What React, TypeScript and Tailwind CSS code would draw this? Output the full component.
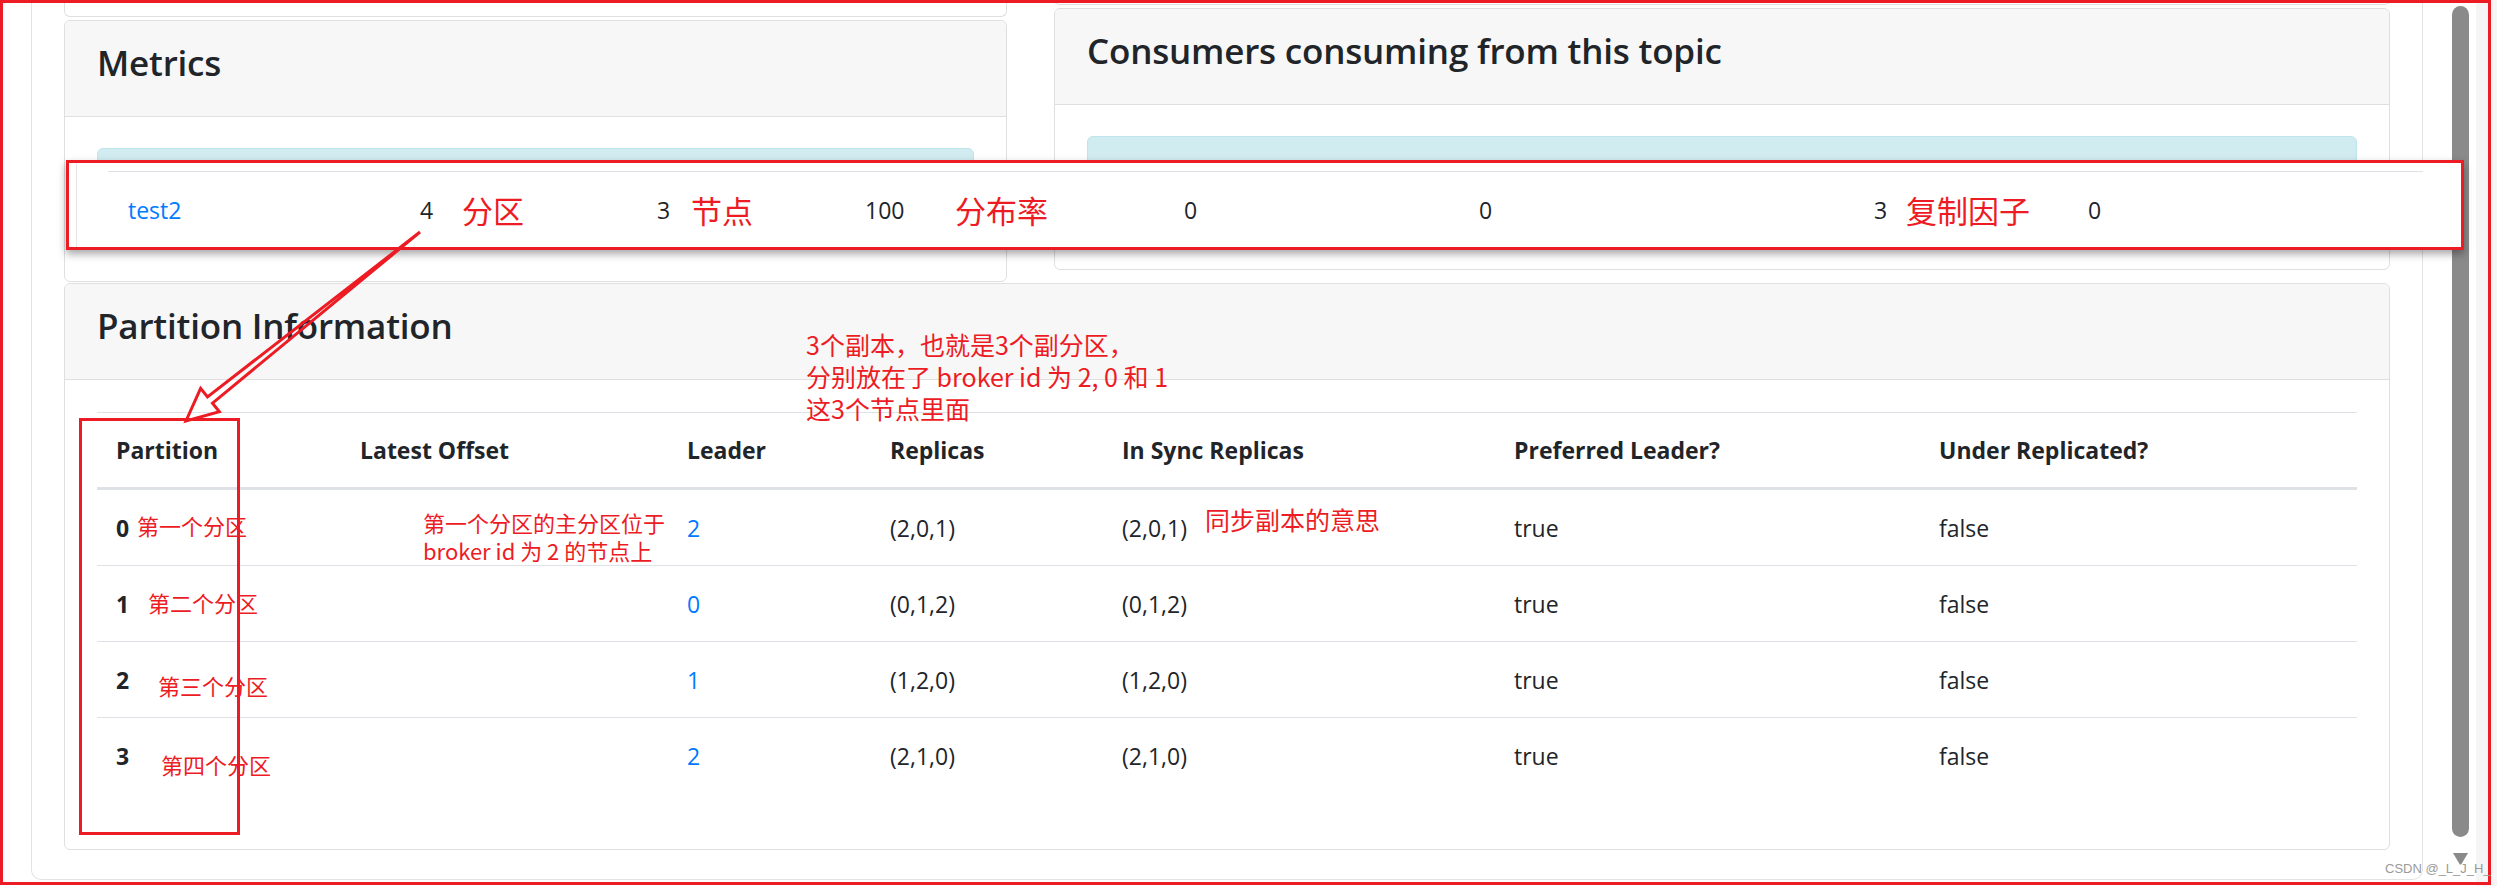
import * as React from 'react'

const RED = 'text-[#ed1c24]'

interface Col {
  label: string
  w: string
}

const columns: Col[] = [
  { label: 'Partition', w: 'w-[244px]' },
  { label: 'Latest Offset', w: 'w-[327px]' },
  { label: 'Leader', w: 'w-[203px]' },
  { label: 'Replicas', w: 'w-[232px]' },
  { label: 'In Sync Replicas', w: 'w-[392px]' },
  { label: 'Preferred Leader?', w: 'w-[425px]' },
  { label: 'Under Replicated?', w: 'w-[437px]' },
]

const partitions = [
  { id: '0', leader: '2', replicas: '(2,0,1)', isr: '(2,0,1)' },
  { id: '1', leader: '0', replicas: '(0,1,2)', isr: '(0,1,2)' },
  { id: '2', leader: '1', replicas: '(1,2,0)', isr: '(1,2,0)' },
  { id: '3', leader: '2', replicas: '(2,1,0)', isr: '(2,1,0)' },
]

// pasted topic row on top of the page, widths follow the cell starts
const topicCells = [
  { w: 'w-[51px]', text: '', cls: '' },
  { w: 'w-[292px]', text: 'test2', cls: 'text-[#007bff]' },
  { w: 'w-[42px]', text: '4', cls: '' },
  { w: 'w-[195px]', text: '分区', cls: 'note' },
  { w: 'w-[34px]', text: '3', cls: '' },
  { w: 'w-[174px]', text: '节点', cls: 'note' },
  { w: 'w-[90px]', text: '100', cls: '' },
  { w: 'w-[229px]', text: '分布率', cls: 'note' },
  { w: 'w-[295px]', text: '0', cls: '' },
  { w: 'w-[395px]', text: '0', cls: '' },
  { w: 'w-[32px]', text: '3', cls: '' },
  { w: 'w-[182px]', text: '复制因子', cls: 'note' },
  { w: 'w-[60px]', text: '0', cls: '' },
]

const Card = ({ title, children, className }: { title: string, children?: React.ReactNode, className?: string }) => (
  <div className={`flex flex-col rounded-[6px] border border-[#dfdfdf] bg-white ${className ?? ''}`}>
    <div className="h-[96px] shrink-0 rounded-t-[6px] border-b border-[#dfdfdf] bg-[#f7f7f7] px-[32px] pt-[21px] text-[35px] font-semibold leading-[42px] tracking-[-0.2px] text-[#212529]">
      {title}
    </div>
    {children}
  </div>
)

const InfoAlert = () => (
  <div className="px-[32px] pt-[31px]">
    <div className="h-[100px] rounded-[6px] border border-[#bee5eb] bg-[#d1ecf1]" />
  </div>
)

const PartitionTable = () => (
  <div className="flex flex-col text-[23px] leading-[36px]">
    <div className="flex h-[78px] border-t border-b-[3px] border-[#dee2e6] font-bold">
      {columns.map(c => (
        <div key={c.label} className={`flex shrink-0 items-center pl-[19px] ${c.w}`}>{c.label}</div>
      ))}
    </div>
    {partitions.map((p, i) => (
      <div
        key={p.id}
        className={`flex ${i < partitions.length - 1 ? 'h-[76px] border-b border-[#dee2e6]' : 'h-[75px]'}`}
      >
        <div className={`flex shrink-0 items-center pl-[19px] font-bold ${columns[0].w}`}>{p.id}</div>
        <div className={`shrink-0 ${columns[1].w}`} />
        <div className={`flex shrink-0 items-center pl-[19px] text-[#007bff] ${columns[2].w}`}>{p.leader}</div>
        <div className={`flex shrink-0 items-center pl-[19px] ${columns[3].w}`}>{p.replicas}</div>
        <div className={`flex shrink-0 items-center pl-[19px] ${columns[4].w}`}>{p.isr}</div>
        <div className={`flex shrink-0 items-center pl-[19px] ${columns[5].w}`}>true</div>
        <div className={`flex shrink-0 items-center pl-[19px] ${columns[6].w}`}>false</div>
      </div>
    ))}
  </div>
)

const Scrollbar = () => (
  <div className="flex w-[17px] shrink-0 flex-col items-center pt-[6px]">
    <div className="h-[831px] w-[17px] rounded-full bg-[#8a8a8a]" />
    <svg className="mt-[15px]" width="17" height="13" viewBox="0 0 17 13">
      <path d="M1 1 L16 1 L9.5 12 Q8.5 13 7.5 12 Z" fill="#8a8a8a" />
    </svg>
  </div>
)

const Note = ({ className, children }: { className: string, children: React.ReactNode }) => (
  <div className={`pointer-events-none absolute whitespace-nowrap font-['Microsoft_YaHei','Noto_Sans_CJK_SC',sans-serif] ${RED} ${className}`}>
    {children}
  </div>
)

export default function App() {
  return (
    <div className="relative h-[886px] w-[2497px] overflow-hidden bg-white font-['Segoe_UI','Open_Sans',sans-serif] text-[#212529]">
      <div className="flex h-full">
        <div className="w-[31px] shrink-0" />

        {/* page container */}
        <div className="flex h-[880px] w-[2392px] shrink-0 flex-col rounded-b-[10px] border-x border-b border-[#e3e3e3] px-[32px]">
          <div className="flex gap-[47px]">
            <div className="flex w-[943px] shrink-0 flex-col gap-[3px]">
              <div className="h-[17px] rounded-b-[6px] border-x border-b border-[#dfdfdf]" />
              <Card title="Metrics" className="h-[262px]">
                <InfoAlert />
              </Card>
            </div>
            <div className="flex w-[1336px] shrink-0 flex-col gap-[3px]">
              <div className="h-[5px] rounded-b-[6px] border-x border-b border-[#dfdfdf]" />
              <Card title="Consumers consuming from this topic" className="h-[262px]">
                <InfoAlert />
              </Card>
            </div>
          </div>

          <Card title="Partition Information" className="mt-[1px] h-[567px]">
            <div className="px-[32px] pt-[32px]">
              <PartitionTable />
            </div>
          </Card>
        </div>

        <div className="w-[29px] shrink-0" />
        <Scrollbar />
        <div className="w-[7px] shrink-0" />
        <div className="flex-1 bg-[#f5f5f5]" />
      </div>

      {/* pasted topic row */}
      <div className="absolute left-[66px] top-[160px] flex h-[90px] w-[2398px] border-[3px] border-[#ed1c24] bg-white shadow-[0_4px_8px_rgba(0,0,0,0.35)]">
        <div className="w-[7px] shrink-0" />
        <div className="flex flex-1 flex-col border-l border-[#e6e6e6] pt-[8px]">
          <div className="ml-[31px] w-[2315px] border-t border-[#dee2e6]" />
          <div className="mt-[20px] flex h-[36px] items-center text-[23px] leading-[36px]">
            {topicCells.map((c, i) => (
              <div
                key={i}
                className={`shrink-0 ${c.w} ${c.cls === 'note' ? `font-['Microsoft_YaHei','Noto_Sans_CJK_SC',sans-serif] text-[31px] ${RED}` : c.cls}`}
              >
                {c.text}
              </div>
            ))}
          </div>
        </div>
      </div>

      {/* annotation arrow */}
      <svg className="pointer-events-none absolute left-0 top-0" width="2497" height="886">
        <polygon
          points="420,232 212.5,403.1 219.4,411.7 186,421 200.6,388.3 207.5,396.9"
          fill="none"
          stroke="#ed1c24"
          strokeWidth="3"
          strokeLinejoin="miter"
        />
      </svg>

      {/* partition column box */}
      <div className="pointer-events-none absolute left-[79px] top-[418px] h-[417px] w-[161px] border-[3px] border-[#ed1c24]" />

      <Note className="left-[806px] top-[328px] text-[25px] leading-[32px]">
        <div>3个副本，也就是3个副分区，</div>
        <div>分别放在了 broker id 为 2, 0 和 1</div>
        <div>这3个节点里面</div>
      </Note>
      <Note className="left-[137px] top-[511px] text-[22px] leading-[28px]">第一个分区</Note>
      <Note className="left-[423px] top-[508px] text-[22px] leading-[28px]">
        <div>第一个分区的主分区位于</div>
        <div>broker id 为 2 的节点上</div>
      </Note>
      <Note className="left-[1205px] top-[504px] text-[25px] leading-[30px]">同步副本的意思</Note>
      <Note className="left-[148px] top-[588px] text-[22px] leading-[28px]">第二个分区</Note>
      <Note className="left-[158px] top-[671px] text-[22px] leading-[28px]">第三个分区</Note>
      <Note className="left-[161px] top-[750px] text-[22px] leading-[28px]">第四个分区</Note>

      {/* screenshot frame */}
      <div className="pointer-events-none absolute left-0 top-0 h-[885px] w-[2491px] border-[3px] border-[#ed1c24]" />

      <div className="absolute left-[2385px] top-[861px] font-['Liberation_Sans',Arial,sans-serif] text-[13px] leading-[16px] text-[#9a9a9a]">
        CSDN @_L_J_H_
      </div>
    </div>
  )
}
